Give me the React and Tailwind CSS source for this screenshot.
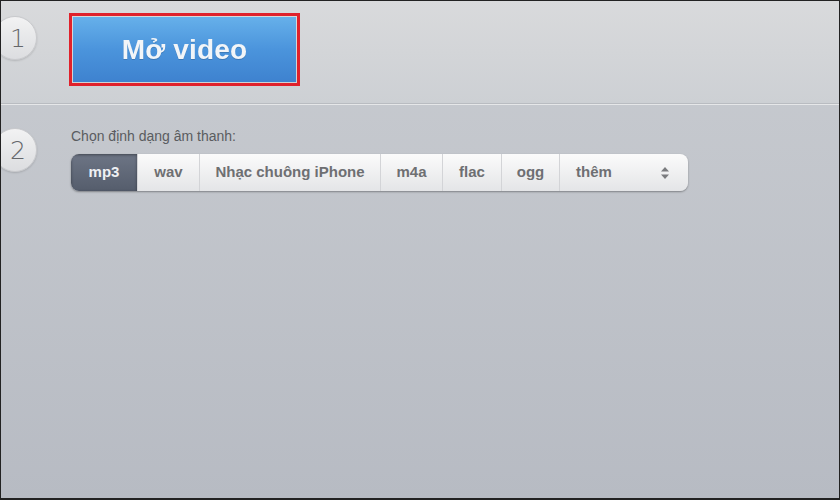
import React from 'react'

const formats = [
  { label: 'mp3', w: 'w-[66px]', active: true },
  { label: 'wav', w: 'w-[62px]' },
  { label: 'Nhạc chuông iPhone', w: 'w-[181px]' },
  { label: 'm4a', w: 'w-[62px]' },
  { label: 'flac', w: 'w-[59px]' },
  { label: 'ogg', w: 'w-[58px]' },
]

function StepNum({ n }) {
  return (
    <div className="shrink-0 ml-[-8px] w-[44px] h-[44px] rounded-full bg-gradient-to-b from-[#f2f2f3] to-[#dcdde0] border border-[#c9cacd] shadow-[0_1px_2px_rgba(0,0,0,0.15)] flex items-center justify-center pl-[6px]">
      <span className="text-[25px] leading-none text-[#65676b] font-['DejaVu_Sans',sans-serif] font-light">{n}</span>
    </div>
  )
}

export default function App() {
  return (
    <div className="w-[840px] h-[500px] border border-b-2 border-[#222] overflow-hidden bg-gradient-to-b from-[#c9ccd1] to-[#b7bbc3] font-['Liberation_Sans',Arial,sans-serif]">
      {/* step 1 */}
      <div className="h-[103px] flex items-start gap-[32px] pt-[12px] bg-gradient-to-b from-[#d9dadc] to-[#cdd0d4] border-b border-[#b9bcc1]">
        <div className="pt-[3px]"><StepNum n="1" /></div>
        <div className="w-[231px] h-[73px] border-[3px] border-[#e0212b] p-px">
          <div className="w-full h-full bg-gradient-to-b from-[#66b0ea] via-[#4b94dc] to-[#3e82cf] flex items-center justify-center">
            <span className="text-[#f2f5f8] font-bold text-[28px] tracking-[0.2px] drop-shadow-[0_1px_0_rgba(0,0,0,0.15)]">Mở video</span>
          </div>
        </div>
      </div>
      <div className="h-px bg-[#e6e7e9]" />

      {/* step 2 */}
      <div className="flex items-start gap-[34px] pt-[23px]">
        <StepNum n="2" />
        <div className="flex flex-col gap-[9px]">
          <p className="text-[14px] text-[#5a5c60] leading-[17px]">Chọn định dạng âm thanh:</p>
          <div className="flex w-[617px] h-[37px] rounded-[8px] bg-gradient-to-b from-[#fbfbfb] to-[#e4e5e7] shadow-[0_1px_2px_rgba(0,0,0,0.35)] overflow-hidden">
            {formats.map((f, i) => (
              <div
                key={i}
                className={
                  f.active
                    ? `${f.w} flex items-center justify-center bg-gradient-to-b from-[#6d7585] to-[#555d6c] text-[#eef0f3] font-bold text-[15px] shadow-[inset_0_1px_3px_rgba(0,0,0,0.4)]`
                    : `${f.w} flex items-center justify-center border-l border-[#d3d4d7] text-[#6e6f72] font-bold text-[15px]`
                }
              >
                {f.label}
              </div>
            ))}
            <div className="flex-1 flex items-center justify-between border-l border-[#d3d4d7] pl-[16px] pr-[18px] text-[#6e6f72] font-bold text-[15px]">
              <span>thêm</span>
              <svg width="10" height="14" viewBox="0 0 10 14">
                <path d="M5 1 L9 5.5 H1 Z" fill="#7a7b7e" />
                <path d="M5 13 L9 8.5 H1 Z" fill="#7a7b7e" />
              </svg>
            </div>
          </div>
        </div>
      </div>
    </div>
  )
}
